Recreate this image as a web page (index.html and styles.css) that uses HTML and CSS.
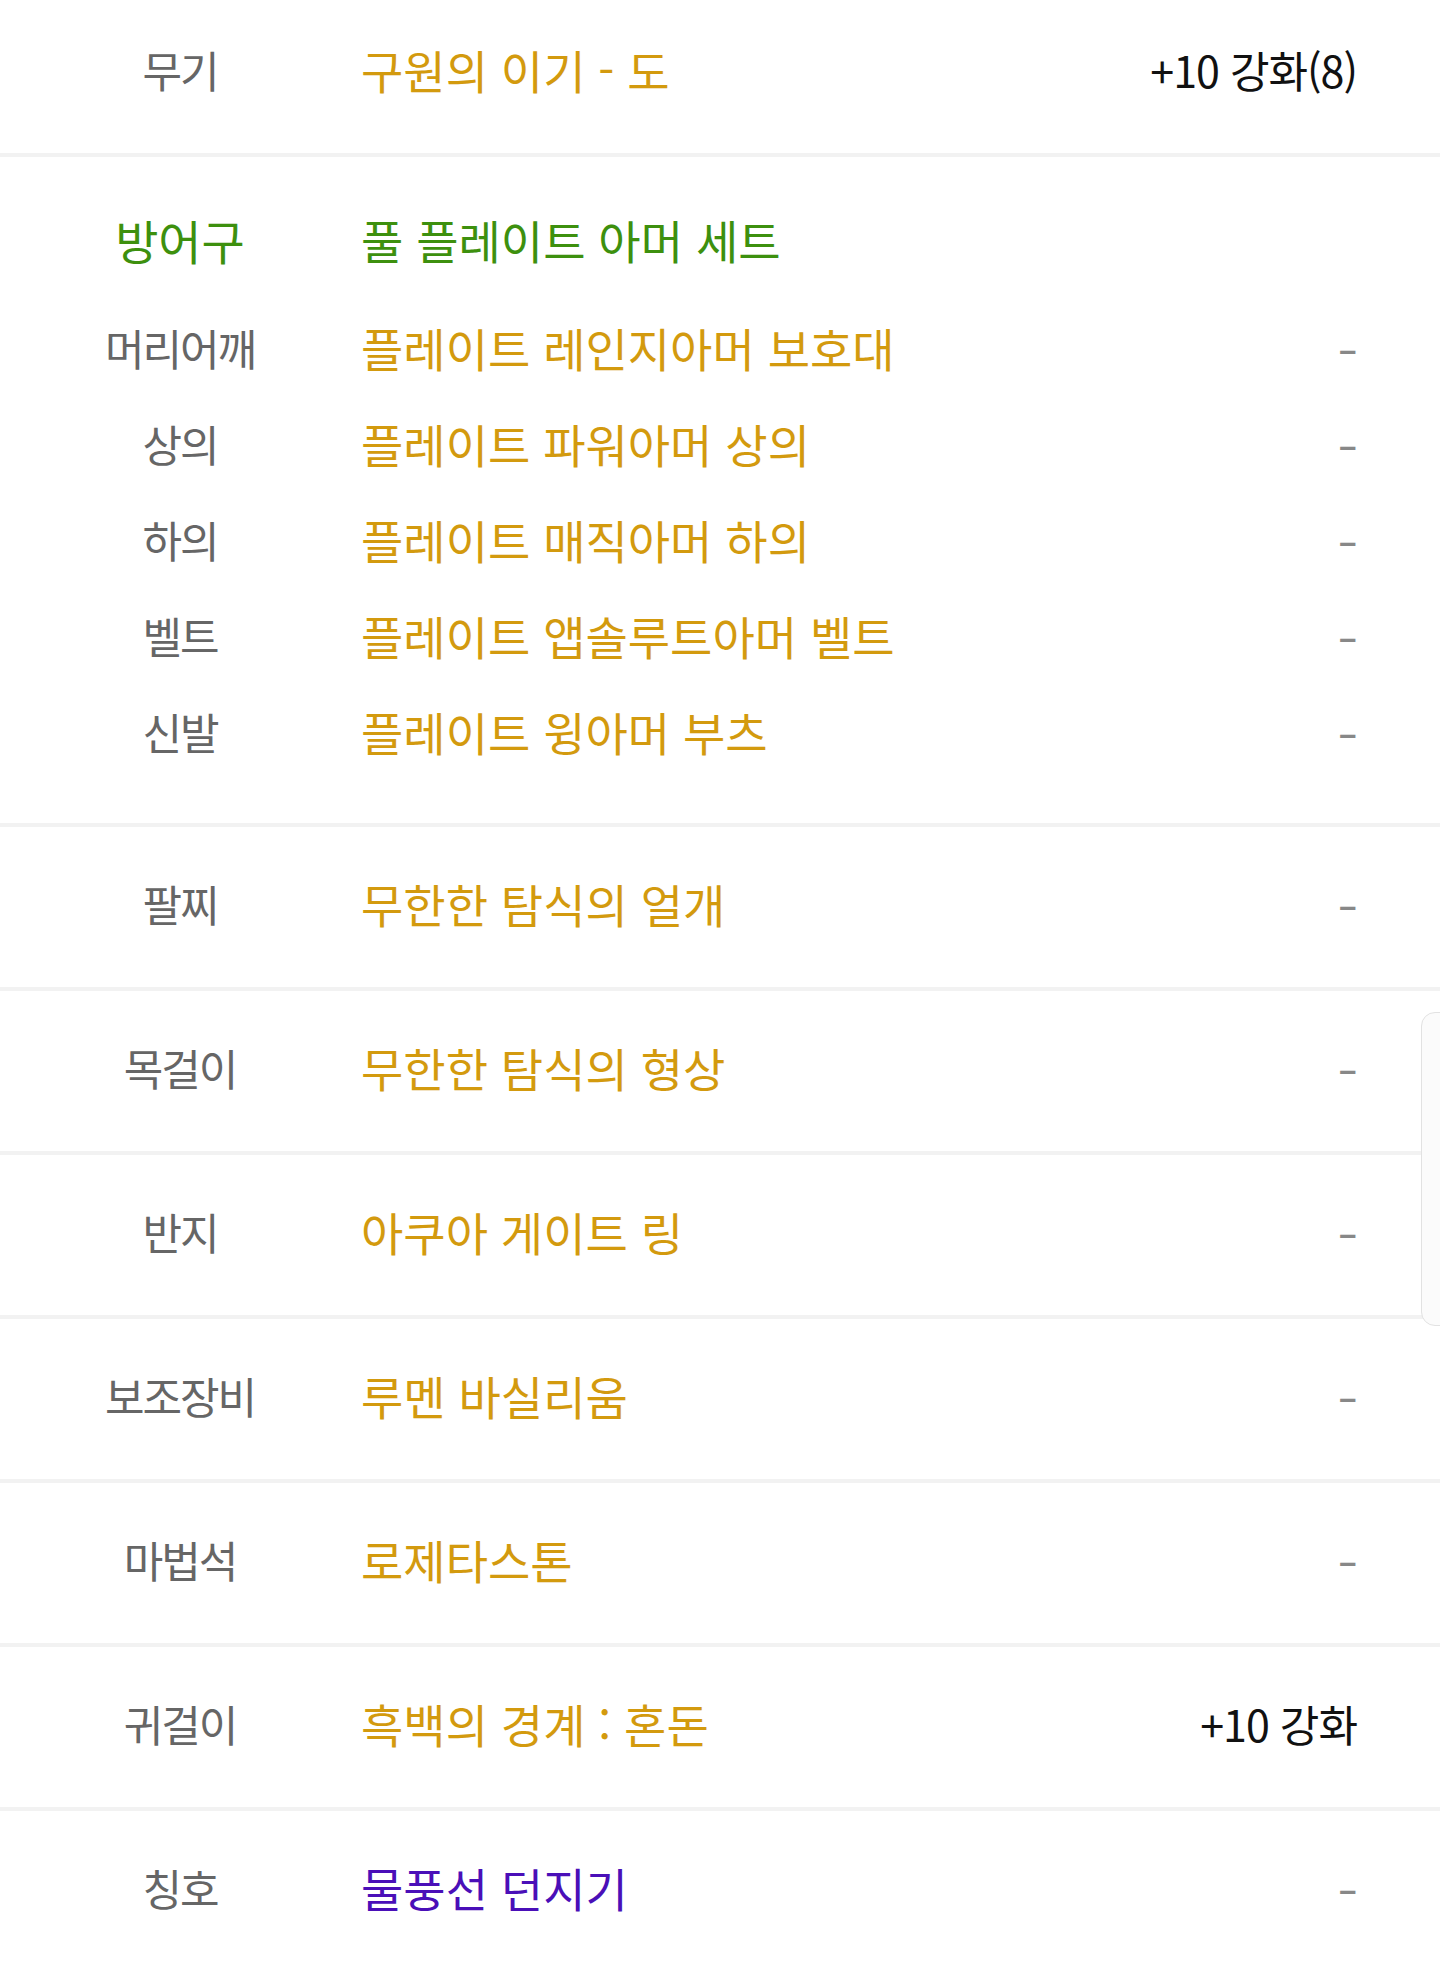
FILE: index.html
```html
<!DOCTYPE html>
<html lang="ko">
<head>
<meta charset="utf-8">
<link rel="stylesheet" href="styles.css">
</head>
<body>
<div class="list">
  <div class="row">
    <div class="label">무기</div>
    <div class="name gold">구원의 이기 - 도</div>
    <div class="value">+10 강화(8)</div>
  </div>
  <div class="group">
    <div class="sub head">
      <div class="label green">방어구</div>
      <div class="name green">풀 플레이트 아머 세트</div>
      <div class="value"></div>
    </div>
    <div class="sub">
      <div class="label">머리어깨</div>
      <div class="name gold">플레이트 레인지아머 보호대</div>
      <div class="value dash">–</div>
    </div>
    <div class="sub">
      <div class="label">상의</div>
      <div class="name gold">플레이트 파워아머 상의</div>
      <div class="value dash">–</div>
    </div>
    <div class="sub">
      <div class="label">하의</div>
      <div class="name gold">플레이트 매직아머 하의</div>
      <div class="value dash">–</div>
    </div>
    <div class="sub">
      <div class="label">벨트</div>
      <div class="name gold">플레이트 앱솔루트아머 벨트</div>
      <div class="value dash">–</div>
    </div>
    <div class="sub">
      <div class="label">신발</div>
      <div class="name gold">플레이트 윙아머 부츠</div>
      <div class="value dash">–</div>
    </div>
  </div>
  <div class="row">
    <div class="label">팔찌</div>
    <div class="name gold">무한한 탐식의 얼개</div>
    <div class="value dash">–</div>
  </div>
  <div class="row">
    <div class="label">목걸이</div>
    <div class="name gold">무한한 탐식의 형상</div>
    <div class="value dash">–</div>
  </div>
  <div class="row">
    <div class="label">반지</div>
    <div class="name gold">아쿠아 게이트 링</div>
    <div class="value dash">–</div>
  </div>
  <div class="row">
    <div class="label">보조장비</div>
    <div class="name gold">루멘 바실리움</div>
    <div class="value dash">–</div>
  </div>
  <div class="row">
    <div class="label">마법석</div>
    <div class="name gold">로제타스톤</div>
    <div class="value dash">–</div>
  </div>
  <div class="row">
    <div class="label">귀걸이</div>
    <div class="name gold">흑백의 경계 : 혼돈</div>
    <div class="value">+10 강화</div>
  </div>
  <div class="row">
    <div class="label">칭호</div>
    <div class="name purple">물풍선 던지기</div>
    <div class="value dash">–</div>
  </div>
</div>
<div class="scroll-handle"></div>
</body>
</html>
```

FILE: styles.css
```css
html, body {
  margin: 0;
  padding: 0;
  background: #ffffff;
}

body {
  font-family: "Noto Sans CJK KR", "Noto Sans", sans-serif;
  font-size: 43px;
  color: #111;
  overflow: hidden;
}

.list {
  margin-top: -7px;
}

.row,
.sub {
  display: grid;
  grid-template-columns: 200px 1fr auto;
  column-gap: 81px;
  align-items: center;
  padding: 0 83px 0 80px;
}

.row {
  height: 152px;
  padding-bottom: 8px;
  border-bottom: 4px solid #f2f2f2;
}

.group {
  padding: 34px 0 44px;
  border-bottom: 4px solid #f2f2f2;
}

.sub {
  height: 96px;
}

.sub.head {
  margin-bottom: 12px;
}

.label {
  text-align: center;
  color: #666666;
  letter-spacing: -2px;
}

.label.green {
  font-size: 47px;
  letter-spacing: 0;
}

.name {
  font-size: 46px;
  white-space: nowrap;
}

.value {
  text-align: right;
  color: #111111;
  white-space: nowrap;
  letter-spacing: -1px;
}

.dash {
  color: #888888;
  font-size: 34px;
  font-weight: 700;
  letter-spacing: 0;
}

.gold {
  color: #d39a0e;
}

.green {
  color: #3d900e;
}

.purple {
  color: #4a0fb8;
}

.scroll-handle {
  position: absolute;
  left: 1421px;
  top: 1012px;
  width: 40px;
  height: 312px;
  border: 1.5px solid #e2e2e2;
  border-radius: 14px;
  background: #fbfbfb;
}
```
